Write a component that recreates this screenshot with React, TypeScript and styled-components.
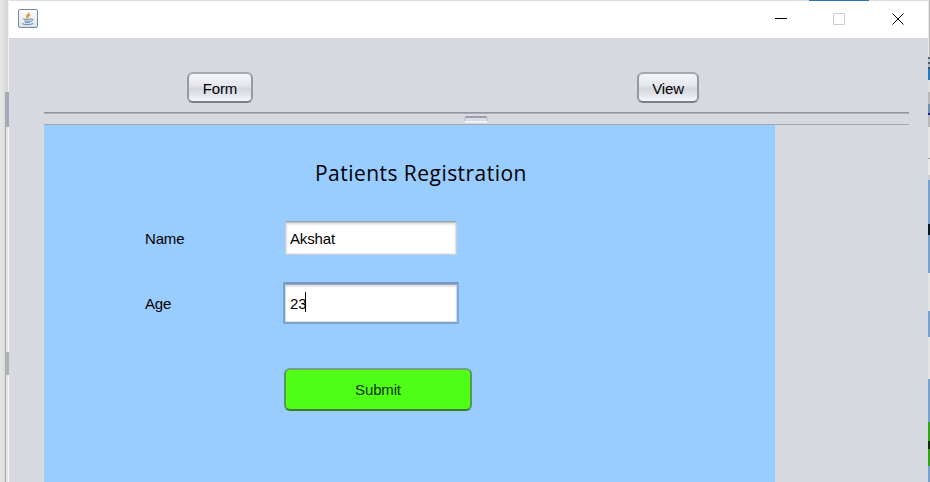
import React from "react";
import styled, { createGlobalStyle } from "styled-components";

const GlobalStyle = createGlobalStyle`
  *, *::before, *::after { box-sizing: border-box; }
  body { margin: 0; background: #e3e3e3; overflow: hidden; }
  button, input { font: inherit; letter-spacing: inherit; color: inherit; margin: 0; }
`;

const Desktop = styled.div`
  width: 930px;
  height: 482px;
  display: grid;
  grid-template-columns: 5px 4px 919px 2px;
  font: 15px/18px "Liberation Sans", Arial, sans-serif;
  letter-spacing: -0.15px;
  color: #000;
  overflow: hidden;
`;

const LeftShade = styled.div`
  background: linear-gradient(90deg, #e7e7e7, #dcdcdc);
`;

const Edge = styled.div`
  display: flex;
  flex-direction: column;
`;

const Sliver = styled.div<{ $h: number; $fill: string }>`
  flex: 0 0 ${(p) => p.$h}px;
  background: ${(p) => p.$fill};
`;

const Window = styled.main`
  display: flex;
  flex-direction: column;
  background: #d6d9e0;
  min-width: 0;
`;

const WindowTop = styled.div`
  height: 1px;
  background: linear-gradient(90deg, #dedede 800px, #2a74b2 800px, #2a74b2 860px, #dedede 860px);
`;

const TitleBar = styled.header`
  height: 37px;
  padding: 0 23px 0 9px;
  display: flex;
  justify-content: space-between;
  background: #fff;
`;

const AppIcon = styled.svg`
  display: block;
  margin-top: 8px;
`;

const Controls = styled.div`
  display: flex;
  gap: 46px;
  padding-top: 11px;
`;

const Control = styled.button`
  width: 13px;
  height: 14px;
  padding: 0;
  border: 0;
  background: none;
  svg { display: block; }
`;

const Toolbar = styled.nav`
  height: 74px;
  padding: 34px 0 0 178px;
  display: flex;
  align-items: flex-start;
  gap: 384px;
`;

const NavButton = styled.button<{ $w: number }>`
  width: ${(p) => p.$w}px;
  height: 31px;
  padding: 2px 0 0;
  border: 2px solid;
  border-color: #a6a9b0 #979aa1 #7b7e85 #979aa1;
  border-radius: 6px;
  background: linear-gradient(#f4f5f8, #e6e8ed 40%, #d5d8df 56%, #e1e4ea 75%, #f4f6fa);
  text-align: center;
`;

const Divider = styled.div`
  height: 13px;
  margin: 0 19px 0 35px;
  padding: 3px 0 0 420px;
  border-top: 1px solid #9296a2;
  border-bottom: 1px solid #a1a6b2;
  box-shadow: inset 0 1px #aaadb6;
`;

const Grip = styled.div`
  width: 24px;
  height: 7px;
  border: 1px solid #c6c9d0;
  border-top: 2px solid #9b9fa8;
  border-bottom: 2px solid #f0f1f4;
  border-radius: 3px 3px 1px 1px;
  background: #d9dce3;
`;

const Panel = styled.form`
  flex: 1;
  width: 731px;
  margin-left: 35px;
  padding-top: 33px;
  background: #99ccff;
`;

const Title = styled.h1`
  margin: 0 0 0 271px;
  height: 30px;
  font: 400 21px/30px "Open Sans", "Noto Sans", sans-serif;
  letter-spacing: 0.46px;
  white-space: nowrap;
`;

const Fields = styled.div`
  margin-top: 31px;
  padding-left: 100px;
  display: grid;
  grid-template-columns: 139px 176px;
  grid-template-rows: 38px 44px;
  row-gap: 24px;
  align-items: center;
`;

const Label = styled.label`
  padding: 2px 0 0 1px;
`;

const Field = styled.input`
  width: 172px;
  height: 34px;
  margin-left: 2px;
  padding: 0 3px 0 4px;
  border: 1px solid;
  border-color: #9ba5b1 #c5cfdb #c5cfdb #c5cfdb;
  background: #fff;
  box-shadow: inset 0 1px #bfc3c8, inset 0 2px 3px #d4d4d4, inset 0 0 0 1px #eeeeee;
  outline: none;
`;

const FocusedField = styled.div`
  width: 176px;
  height: 42px;
  padding: 1px 5px 0;
  display: flex;
  align-items: center;
  border: 2px solid;
  border-color: #7597bc #83aad4 #7da4ce #7ba1ca;
  border-radius: 1px;
  background: #fff;
  box-shadow: inset 0 1px #9faec0, inset 0 2px 3px #c8cbd0, inset 0 0 0 1px #dce2e9;
`;

const Caret = styled.span`
  width: 1px;
  height: 20px;
  margin: 0 0 3px -1px;
  background: #000;
`;

const Submit = styled.button`
  display: block;
  width: 188px;
  height: 43px;
  margin: 43px 0 0 240px;
  padding: 0;
  border: 2px solid;
  border-color: #72a37c #57985a #3c7c2c #57985a;
  border-radius: 6px;
  background: #50ff16;
  color: #12300b;
`;

const leftSlivers: [number, string][] = [
  [92, "linear-gradient(90deg, #d8d8d8 0 3px, #f1f1f1 3px)"],
  [35, "#a5abb4"],
  [225, "linear-gradient(90deg, #a9a9a9 1px, #e4e4e4 1px 3px, #f7f7f7 3px)"],
  [23, "#b0b1b4"],
  [107, "linear-gradient(90deg, #a9a9a9 1px, #e4e4e4 1px 3px, #f7f7f7 3px)"],
];

const rightSlivers: [number, string][] = [
  [57, "linear-gradient(90deg, #e6e6e6 1px, #bbbbbb 1px)"],
  [2, "#555b60"], [3, "#b4ccdc"], [2, "#555b60"], [3, "#a8bac6"], [2, "#42505d"],
  [11, "#2379be"],
  [12, "#dfdfdf"], [12, "#b9b9b9"], [9, "#6d90ad"], [2, "#211999"], [12, "#b9b9b9"],
  [31, "#e5e5e5"], [1, "#9c9c9c"], [16, "#e8e8e8"], [5, "#cbced6"],
  [44, "#75a2d0"], [11, "#071625"], [38, "#75a2d0"],
  [38, "#e4e4e4"], [26, "#75a2d0"], [42, "#e4e4e4"],
  [43, "#75a2d0"], [19, "#31a612"], [8, "#102d0a"], [17, "#31a612"], [16, "#75a2d0"],
];

function JavaIcon() {
  return (
    <AppIcon width="20" height="20" viewBox="0 0 20 20" fill="none">
      <defs>
        <linearGradient id="javaTile" x1="0" y1="0" x2="0" y2="1">
          <stop stopColor="#fff" />
          <stop offset="1" stopColor="#d9e2e9" />
        </linearGradient>
      </defs>
      <rect x=".5" y=".5" width="19" height="18" rx="1.5" fill="url(#javaTile)" stroke="#788b9c" />
      <path d="M10.8 3.5c1 2-3.2 2.7-2.1 4.5l1 1.3M12 5.7c-2.1 1-2.1 1.7-1.2 2.5" stroke="#e59a43" strokeWidth="1.5" />
      <path d="M5.2 9.8c2 .8 6 .8 8 0M6.2 11.8c2 .8 4.8.7 6.4 0M7 13.2c1.6.6 3.4.6 5 0M13.2 10.1c2.7-.7 2.1 1.8-.3 2.2M4.2 14.7c2.6 1.3 8 1.2 11-.2" stroke="#6788a6" strokeWidth="1" />
    </AppIcon>
  );
}

function EdgeStrip({ slivers }: { slivers: [number, string][] }) {
  return (
    <Edge aria-hidden="true">
      {slivers.map(([h, fill], i) => <Sliver key={i} $h={h} $fill={fill} />)}
    </Edge>
  );
}

export default function App() {
  return (
    <>
      <GlobalStyle />
      <Desktop>
        <LeftShade />
        <EdgeStrip slivers={leftSlivers} />
        <Window>
          <WindowTop />
          <TitleBar>
            <JavaIcon />
            <Controls>
              <Control aria-label="Minimize">
                <svg width="13" height="14"><path d="M1 6.5h12" stroke="#000" /></svg>
              </Control>
              <Control aria-label="Maximize" disabled>
                <svg width="13" height="14"><path d="M.5 1.5h11v11H.5z" fill="none" stroke="#cccccc" /></svg>
              </Control>
              <Control aria-label="Close">
                <svg width="13" height="14"><path d="M.5 1.5l11 11M11.5 1.5l-11 11" stroke="#000" strokeWidth="1" /></svg>
              </Control>
            </Controls>
          </TitleBar>
          <Toolbar>
            <NavButton $w={66}>Form</NavButton>
            <NavButton $w={62}>View</NavButton>
          </Toolbar>
          <Divider><Grip /></Divider>
          <Panel onSubmit={(e) => e.preventDefault()}>
            <Title>Patients Registration</Title>
            <Fields>
              <Label htmlFor="name">Name</Label>
              <Field id="name" defaultValue="Akshat" />
              <Label>Age</Label>
              <FocusedField>23<Caret /></FocusedField>
            </Fields>
            <Submit type="submit">Submit</Submit>
          </Panel>
        </Window>
        <EdgeStrip slivers={rightSlivers} />
      </Desktop>
    </>
  );
}
